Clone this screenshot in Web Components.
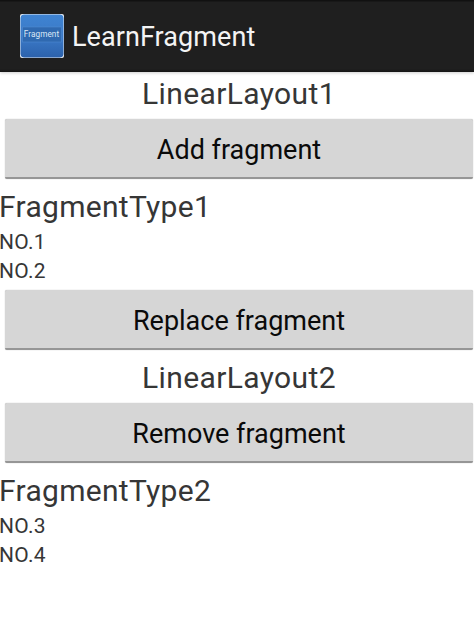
<!DOCTYPE html>
<html><head><meta charset="utf-8"><title>LearnFragment</title>
<style>html,body{margin:0;padding:0;background:#fff;font-family:Roboto,sans-serif}</style></head>
<body>
<app-page>
<app-bar slot="bar">LearnFragment</app-bar>
<section-title>LinearLayout1</section-title>
<android-button>Add fragment</android-button>
<fragment-panel heading="FragmentType1"><list-line>NO.1</list-line><list-line>NO.2</list-line></fragment-panel>
<android-button class="gap">Replace fragment</android-button>
<section-title>LinearLayout2</section-title>
<android-button>Remove fragment</android-button>
<fragment-panel heading="FragmentType2"><list-line>NO.3</list-line><list-line>NO.4</list-line></fragment-panel>
</app-page>
<script>
function def(name,html,init){customElements.define(name,class extends HTMLElement{constructor(){super();this.attachShadow({mode:'open'}).innerHTML=html;}connectedCallback(){if(init)init(this)}})}
def('app-page',`<style>:host{display:flex;flex-direction:column;width:474px;height:636px;overflow:hidden;background:#fff;color:#363636;font-family:Roboto,sans-serif}</style><slot name="bar"></slot><slot></slot>`);
def('app-bar',`<style>:host{display:flex;align-items:center;gap:8px;flex:none;box-sizing:border-box;height:72px;padding:0 0 0 20px;background:linear-gradient(#111 0,#111 1px,#1f1f1f 2px,#1f1f1f 69px,#141414 72px);color:#f4f4f4;font-size:27px;letter-spacing:.07px;box-shadow:0 1px 3px rgba(0,0,0,.2);position:relative}span{margin-top:2px}</style><app-icon></app-icon><span><slot></slot></span>`);
def('app-icon',`<style>:host{display:block;flex:none;width:44px;height:44px;line-height:0}</style><svg width="44" height="44" viewBox="0 0 44 44"><defs><linearGradient id="g" x1="0" y1="0" x2="0" y2="1"><stop offset="0" stop-color="#3f84d2"/><stop offset=".55" stop-color="#3a78c6"/><stop offset="1" stop-color="#2c62ac"/></linearGradient></defs><rect width="44" height="44" fill="#e8edf2" rx="2"/><rect x=".5" y=".5" width="43" height="43" rx="4" fill="url(#g)"/><rect x="2.5" y="13" width="39" height="15" fill="#2f69b0" stroke="#4f8bd0" stroke-width=".6"/><text x="21.5" y="22.5" text-anchor="middle" font-family="Roboto,sans-serif" font-size="8.2" fill="#dbe8f7">Fragment</text></svg>`);
def('section-title',`<style>:host{display:block;box-sizing:border-box;text-align:center;font-size:30px;letter-spacing:.38px;line-height:43px;height:43px;padding-left:4px}</style><slot></slot>`);
def('android-button',`<style>:host{display:flex;flex:none;box-sizing:border-box;align-items:center;justify-content:center;margin:4px 1px 0 5px;height:60px;background:#d6d6d6;border-radius:2px;border-bottom:2px solid #969696;box-shadow:0 0 1px rgba(0,0,0,.38);color:#0a0a0a;font-size:27px;padding-top:4px}:host(.gap){margin-bottom:6px}</style><slot></slot>`);
def('fragment-panel',`<style>:host{display:block;padding-top:7px;height:107px;box-sizing:border-box}.h{font-size:30px;letter-spacing:.3px;line-height:42px;height:42px;margin-left:-1px}</style><div class="h"></div><slot></slot>`,el=>{el.shadowRoot.querySelector('.h').textContent=el.getAttribute('heading')});
def('list-line',`<style>:host{display:block;font-size:21px;letter-spacing:.25px;line-height:29px;height:29px;margin-left:-1px}</style><slot></slot>`);
</script>
</body></html>
